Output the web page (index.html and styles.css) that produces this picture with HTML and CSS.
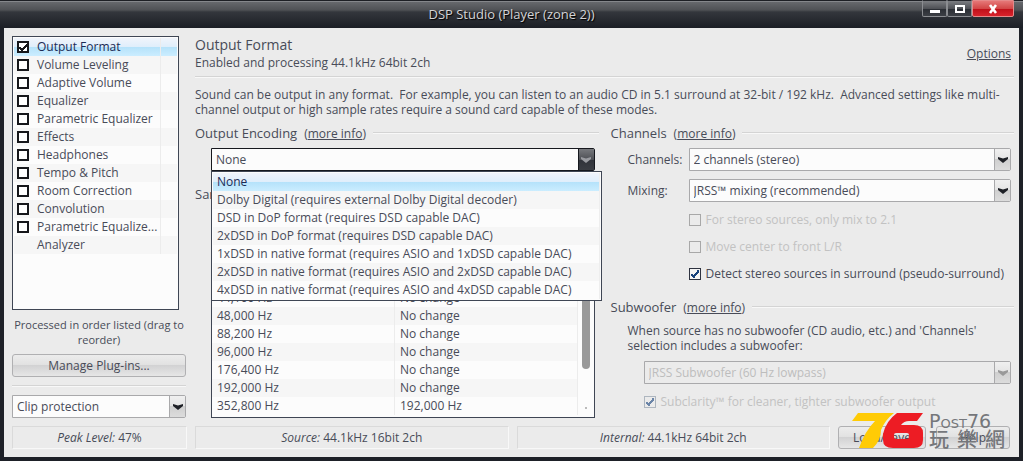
FILE: index.html
```html
<!DOCTYPE html>
<html lang="en">
<head>
<meta charset="utf-8">
<title>DSP Studio (Player (zone 2))</title>
<link rel="stylesheet" href="styles.css">
</head>
<body>
<div class="window">
  <header class="titlebar">
    <h1 class="title">DSP Studio (Player (zone 2))</h1>
    <div class="controls">
      <button class="ctl" aria-label="Minimize"><svg width="12" height="12"><path d="M1 7h10v3H1z" fill="#fff"/></svg></button>
      <button class="ctl" aria-label="Maximize"><svg width="12" height="12"><path d="M2 3h8v6H2z" fill="none" stroke="#fff" stroke-width="2"/></svg></button>
      <button class="ctl ctl-close" aria-label="Close"><svg width="12" height="12"><path d="M3 2l6 8M9 2l-6 8" stroke="#fff" stroke-width="2.600"/></svg></button>
    </div>
  </header>

  <div class="body">
    <div class="panes">
      <aside class="side">
        <ul class="box plugins">
          <li class="row selected"><label><input class="check heavy" type="checkbox" checked><span>Output Format</span></label></li>
          <li class="row"><label><input class="check heavy" type="checkbox"><span>Volume Leveling</span></label></li>
          <li class="row"><label><input class="check heavy" type="checkbox"><span>Adaptive Volume</span></label></li>
          <li class="row"><label><input class="check heavy" type="checkbox"><span>Equalizer</span></label></li>
          <li class="row"><label><input class="check heavy" type="checkbox"><span>Parametric Equalizer</span></label></li>
          <li class="row"><label><input class="check heavy" type="checkbox"><span>Effects</span></label></li>
          <li class="row"><label><input class="check heavy" type="checkbox"><span>Headphones</span></label></li>
          <li class="row"><label><input class="check heavy" type="checkbox"><span>Tempo &amp; Pitch</span></label></li>
          <li class="row"><label><input class="check heavy" type="checkbox"><span>Room Correction</span></label></li>
          <li class="row"><label><input class="check heavy" type="checkbox"><span>Convolution</span></label></li>
          <li class="row"><label><input class="check heavy" type="checkbox"><span>Parametric Equalize...</span></label></li>
          <li class="row"><span class="plain">Analyzer</span></li>
        </ul>
        <p class="hint">Processed in order listed (drag to reorder)</p>
        <button class="btn">Manage Plug-ins...</button>
        <hr class="rule">
        <div class="combo">
          <select class="select" aria-label="Clipping"><option>Clip protection</option></select>
          <span class="drop"><svg width="10" height="6"><path d="M0 0l5 1.500L10 0v2L5 6 0 2z"/></svg></span>
        </div>
      </aside>

      <main class="main">
        <div class="head">
          <div>
            <h2 class="heading">Output Format</h2>
            <p class="sub">Enabled and processing 44.1kHz 64bit 2ch</p>
          </div>
          <a class="link" href="#">Options</a>
        </div>
        <hr class="rule">
        <p class="intro">Sound can be output in any format.&nbsp; For example, you can listen to an audio CD in 5.1 surround at 32-bit / 192 kHz.&nbsp; Advanced settings like multi-channel output or high sample rates require a sound card capable of these modes.</p>

        <div class="columns">
          <section class="col">
            <div class="section"><h3 class="label">Output Encoding</h3><span>(<a class="link" href="#">more info</a>)</span><hr class="rule"></div>
            <div class="encoding">
              <div class="combo open">
                <select class="select" aria-label="Output Encoding"><option>None</option></select>
                <span class="drop"><svg width="10" height="6"><path d="M0 0l5 1.500L10 0v2L5 6 0 2z"/></svg></span>
              </div>
              <ul class="popup" role="listbox" aria-label="Output Encoding">
                <li class="row selected" role="option" aria-selected="true">None</li>
                <li class="row" role="option">Dolby Digital (requires external Dolby Digital decoder)</li>
                <li class="row" role="option">DSD in DoP format (requires DSD capable DAC)</li>
                <li class="row" role="option">2xDSD in DoP format (requires DSD capable DAC)</li>
                <li class="row" role="option">1xDSD in native format (requires ASIO and 1xDSD capable DAC)</li>
                <li class="row" role="option">2xDSD in native format (requires ASIO and 2xDSD capable DAC)</li>
                <li class="row" role="option">4xDSD in native format (requires ASIO and 4xDSD capable DAC)</li>
              </ul>
            </div>
            <h3 class="label rates-label">Sample Rate</h3>
            <div class="box rates">
              <table class="table">
                <tr class="row"><td>44,100 Hz</td><td>No change</td></tr>
                <tr class="row"><td>48,000 Hz</td><td>No change</td></tr>
                <tr class="row"><td>88,200 Hz</td><td>No change</td></tr>
                <tr class="row"><td>96,000 Hz</td><td>No change</td></tr>
                <tr class="row"><td>176,400 Hz</td><td>No change</td></tr>
                <tr class="row"><td>192,000 Hz</td><td>No change</td></tr>
                <tr class="row"><td>352,800 Hz</td><td>192,000 Hz</td></tr>
              </table>
              <div class="scroll"><span class="thumb"></span><span class="dot"></span></div>
            </div>
          </section>

          <section class="col">
            <div class="section"><h3 class="label">Channels</h3><span>(<a class="link" href="#">more info</a>)</span><hr class="rule"></div>
            <div class="fields">
              <label for="channels">Channels:</label>
              <div class="combo">
                <select class="select" id="channels"><option>2 channels (stereo)</option></select>
                <span class="drop"><svg width="10" height="6"><path d="M0 0l5 1.500L10 0v2L5 6 0 2z"/></svg></span>
              </div>
              <label for="mixing">Mixing:</label>
              <div class="combo">
                <select class="select" id="mixing"><option>JRSS™ mixing (recommended)</option></select>
                <span class="drop"><svg width="10" height="6"><path d="M0 0l5 1.500L10 0v2L5 6 0 2z"/></svg></span>
              </div>
              <div class="options">
                <label class="opt off"><input class="check" type="checkbox" disabled>For stereo sources, only mix to 2.1</label>
                <label class="opt off"><input class="check" type="checkbox" disabled>Move center to front L/R</label>
                <label class="opt"><input class="check" type="checkbox" checked>Detect stereo sources in surround (pseudo-surround)</label>
              </div>
            </div>
            <div class="section subwoofer"><h3 class="label">Subwoofer</h3><span>(<a class="link" href="#">more info</a>)</span><hr class="rule"></div>
            <p class="note">When source has no subwoofer (CD audio, etc.) and 'Channels' selection includes a subwoofer:</p>
            <div class="nested">
              <div class="combo off">
                <select class="select" aria-label="Subwoofer source" disabled><option>JRSS Subwoofer (60 Hz lowpass)</option></select>
                <span class="drop"><svg width="10" height="6"><path d="M0 0l5 1.500L10 0v2L5 6 0 2z"/></svg></span>
              </div>
              <label class="opt off"><input class="check" type="checkbox" checked disabled>Subclarity™ for cleaner, tighter subwoofer output</label>
            </div>
          </section>
        </div>
      </main>
    </div>

    <footer class="status">
      <div class="cell peak"><i>Peak Level:</i> 47%</div>
      <div class="cell"><i>Source:</i> 44.1kHz 16bit 2ch</div>
      <div class="cell"><i>Internal:</i> 44.1kHz 64bit 2ch</div>
      <div class="actions">
        <button class="btn load">Load/Save</button>
        <button class="btn help">Help</button>
      </div>
    </footer>
  </div>

  <div class="mark">
    <svg class="logo" width="72" height="36" viewBox="0 0 72 36">
      <path d="M6 0H42Q33 7 29 17Q29 27 21 35H7Q13 18 23 8H0z" fill="#ffcb05"/>
      <path d="M45 0H71L65 8H57Q52 8 49 12H62Q71 12 71 20V27Q71 35 62 35H41Q31 35 31 27V21Q34 8 45 0zM44 20Q42 20 42 22V24Q42 26 44 26H55Q57 26 57 24V22Q57 20 55 20z" fill="#ed1c24" fill-rule="evenodd"/>
    </svg>
    <div class="brand">
      <span class="latin">Post76</span>
      <span class="cjk" lang="zh-Hant"><b>玩</b><b>樂</b><b>網</b></span>
    </div>
  </div>
</div>
</body>
</html>
```
FILE: styles.css
```css
* { box-sizing: border-box; }

body {
  margin: 0;
  font: 12px/15px "Open Sans", "Noto Sans", sans-serif;
  color: #484b58;
}

h1, h2, h3, p, ul { margin: 0; padding: 0; font-weight: 400; }
ul { list-style: none; }
button, select, input { font: inherit; color: inherit; margin: 0; }

.window {
  position: relative;
  display: flex;
  flex-direction: column;
  min-height: 100vh;
  padding: 0 4px 4px;
  background: #1e2128;
}

.titlebar {
  display: grid;
  grid-template-columns: 1fr auto 1fr;
  align-items: start;
  height: 28px;
  margin: 0 -4px;
  padding: 0 9px;
  background: linear-gradient(#1d1f24 0 1px, #85878b 1px 2px, #66686c 2px, #4f5155 10px, #33363c 12px, #1b1e25 28px);
}
.title {
  grid-column: 2;
  line-height: 28px;
  font-size: 13px;
  color: #d4d4d6;
  text-shadow: 1px 1px 1px #000;
}
.controls { display: flex; justify-self: end; }
.ctl {
  display: flex;
  align-items: center;
  justify-content: center;
  width: 25px;
  height: 17px;
  padding: 0;
  border: 1px solid #8b8d91;
  border-top-color: #24262b;
  border-radius: 0 0 2px 2px;
  background: linear-gradient(#7c7e82, #4f5156 50%, #2a2d33 51%, #3c3f45);
}
.ctl-close {
  width: 42px;
  border-color: #e58a8a;
  background: linear-gradient(#e57777, #d24747 50%, #be1019 51%, #d8222b);
}

.body {
  flex: 1;
  display: flex;
  flex-direction: column;
  gap: 8px;
  padding: 8px 5px 8px 8px;
  background: #ebebeb;
}
.panes { flex: 1; display: flex; gap: 9px; }
.side { width: 174px; display: flex; flex-direction: column; }
.main { flex: 1; display: flex; flex-direction: column; min-width: 0; }

.box { border: 1px solid #3f4654; background: #fcfcfc; }
.row {
  height: 18px;
  line-height: 18px;
  white-space: nowrap;
  background: #fcfcfc;
}
.row:nth-child(even) { background: #f6f6f6; }
.row.selected {
  color: #1b2b55;
  background: linear-gradient(#f0f4fb, #dfeefb 50%, #b5e2fa 51%, #cbedff);
}
.plugins {
  flex: 1;
  margin-right: 7px;
  padding: 1px;
}
.plugins .row {
  padding-left: 3px;
  border-right: 16px solid transparent;
  background-clip: border-box;
  box-shadow: inset -1px 0 #ececec;
}
.plugins label { display: flex; align-items: center; gap: 8px; height: 18px; }
.plugins .plain { padding-left: 20px; }

.check {
  appearance: none;
  flex: none;
  width: 12px;
  height: 12px;
  border: 1px solid #2e3340;
  background: #f4f4f4 center / 10px 10px no-repeat;
}
.check.heavy { border: 2px solid #16171b; background-color: #fff; }
.check:checked {
  background-image: linear-gradient(50deg, transparent 30%, #17427c 30% 70%, transparent 70%), linear-gradient(-50deg, transparent 38%, #17427c 38% 62%, transparent 62%);
  background-size: 4px 4px, 6px 8px;
  background-position: 1px 5px, 3px 1px;
}
.check.heavy:checked {
  background-image: linear-gradient(50deg, transparent 30%, #16171b 30% 70%, transparent 70%), linear-gradient(-50deg, transparent 38%, #16171b 38% 62%, transparent 62%);
  background-size: 4px 4px, 5px 7px;
  background-position: 0 4px, 3px 1px;
}
.check:disabled { border-color: #a8a8a8; background-color: #ebebeb; }
.check:checked:disabled { border-color: #8794a3; opacity: 0.6; }

.hint { padding: 7px 0; font-size: 11px; text-align: center; }

.btn {
  height: 23px;
  padding: 0;
  border: 1px solid #b0b0b2;
  border-radius: 3px;
  background: linear-gradient(#ececec, #e2e2e2 45%, #d2d2d3 50%, #e6e6e6);
  line-height: 20px;
}

.rule {
  width: 100%;
  height: 2px;
  margin: 0;
  border: 0;
  border-top: 1px solid #d4d4d4;
  border-bottom: 1px solid #f8f8f8;
}
.side .rule { margin: 8px 0; }

.combo {
  display: grid;
  grid-template-columns: 1fr 16px;
  height: 23px;
  border: 1px solid #a9a9ab;
  border-radius: 0 2px 2px 0;
  background: #fcfcfc;
}
.select {
  appearance: none;
  min-width: 0;
  padding: 0 4px;
  border: 0;
  background: none;
  line-height: 20px;
}
.drop {
  display: flex;
  align-items: center;
  justify-content: center;
  border-left: 1px solid #a9a9ab;
  background: linear-gradient(#f0f0f0, #e4e4e4 48%, #cfcfcf 50%, #dcdcdc);
  fill: #1e2026;
}
.combo.open { border-color: #16181e; }
.open .drop {
  border-color: #16181e;
  background: linear-gradient(#77797d, #4e5055 50%, #30333a 51%, #3a3d43);
  fill: #999ba0;
}
.combo.off { background: none; color: #bdbdbd; }
.combo.off .select { opacity: 1; }
.off .drop { fill: #999; }

.head {
  display: flex;
  align-items: center;
  justify-content: space-between;
  padding-right: 3px;
}
.heading { font-size: 14px; line-height: 18px; }
.sub { line-height: 17px; }
.link { color: inherit; text-decoration: underline; }
.main > .rule { margin-top: 5px; }
.intro { padding: 9px 0 8px; }

.columns {
  flex: 1;
  display: grid;
  grid-template-columns: 1fr 1fr;
  gap: 12px;
}
.col { display: flex; flex-direction: column; min-width: 0; }
.section {
  display: flex;
  align-items: center;
  gap: 7px;
  height: 16px;
  white-space: nowrap;
}
.section .rule { flex: 1; }
.label { font-size: 13px; line-height: 16px; }

.encoding { position: relative; margin: 7px 4px 0 16px; }
.popup {
  position: absolute;
  top: 23px;
  left: 0;
  right: -7px;
  z-index: 1;
  padding: 1px;
  border: 1px solid #3f4654;
  background: #fcfcfc;
}
.popup .row { padding-left: 4px; box-shadow: inset -17px 0 0 -16px #eee; }
.rates-label { margin-top: 15px; }
.rates {
  flex: 1;
  display: flex;
  align-items: flex-end;
  margin: 8px 4px 0 16px;
}
.table {
  flex: 1;
  border-collapse: collapse;
  table-layout: fixed;
  margin-bottom: 2px;
}
.table td { width: 50%; padding: 0 5px; border-right: 1px solid #ececec; }
.scroll {
  align-self: stretch;
  display: flex;
  flex-direction: column;
  align-items: center;
  width: 16px;
}
.thumb { width: 8px; flex: 1; border-radius: 4px; background: #999; }
.dot { width: 2px; height: 2px; margin: 38px 0 8px; background: #bbb; }

.fields {
  display: grid;
  grid-template-columns: 61px 1fr;
  align-items: center;
  row-gap: 8px;
  margin: 7px 3px 0 17px;
}
.options {
  grid-column: 2;
  display: grid;
  row-gap: 12px;
  margin-top: 2px;
}
.opt { display: flex; align-items: center; gap: 5px; white-space: nowrap; }
.opt.off { color: #c2c2c2; }
.subwoofer { margin-top: 18px; }
.note { padding: 8px 0 8px 17px; }
.nested { display: grid; row-gap: 10px; padding: 0 3px 0 33px; }

.status { display: flex; gap: 8px; padding-right: 4px; }
.cell {
  flex: 1;
  height: 23px;
  line-height: 21px;
  text-align: center;
  border: 1px solid #dadada;
  border-right-color: #f8f8f8;
  border-bottom-color: #f8f8f8;
}
.cell.peak { flex: none; width: 175px; }
.actions { display: flex; gap: 10px; }
.load { width: 88px; }
.help { width: 74px; }

.mark {
  position: absolute;
  right: 18px;
  bottom: 12px;
  display: flex;
  gap: 5px;
  align-items: flex-end;
  color: #75777b;
  pointer-events: none;
}
.brand { display: grid; width: 76px; }
.latin {
  font: small-caps 19px/16px "DejaVu Sans", sans-serif;
}
.cjk {
  display: flex;
  justify-content: space-between;
  font: 20px/20px "Noto Sans CJK TC", sans-serif;
}
.cjk b { font-weight: 500; }
```
